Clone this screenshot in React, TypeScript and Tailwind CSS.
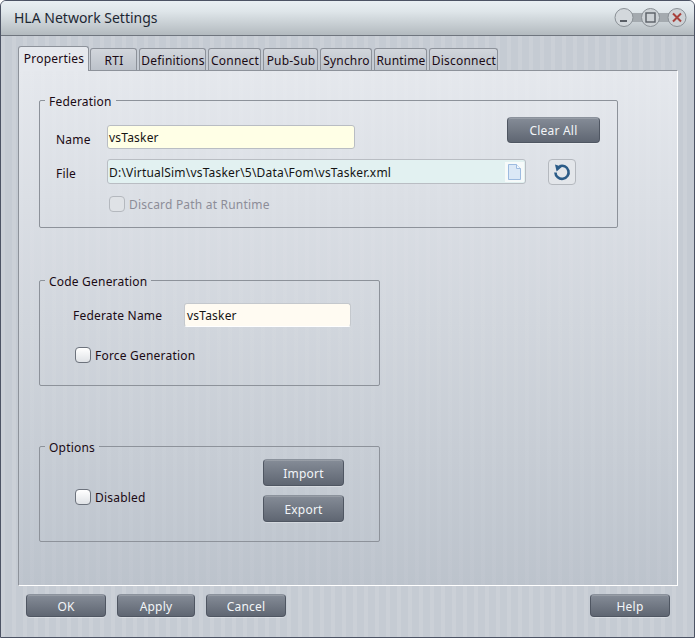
import React from "react";

const font = "font-['Noto_Sans','Open_Sans',sans-serif] text-[12px] leading-[16px] tracking-[0.2px]";

function DarkButton({ label, className }: { label: string; className: string }) {
  return (
    <button
      className={`flex items-center justify-center rounded-[4px] border border-[#4f5662] border-t-[#8b929c] bg-[linear-gradient(#858c97,#5f6672)] pt-[2px] text-[#f2f5f8] shadow-[inset_0_1px_0_rgba(255,255,255,0.15),0_1px_0_rgba(255,255,255,0.3)] ${className}`}
    >
      {label}
    </button>
  );
}

function Check({ label, disabled }: { label: string; disabled?: boolean }) {
  return (
    <div className={`flex items-start gap-[4px] ${disabled ? "text-[#8d8d98]" : "text-[#1a0a14]"}`}>
      <span
        className={`h-[16px] w-[16px] rounded-[4px] border ${
          disabled
            ? "border-[#b4b8be] bg-[#dfe2e6]"
            : "border-[#6c727c] bg-[linear-gradient(#ffffff,#dfe2e6)]"
        }`}
      />
      <span className="pt-[1px]">{label}</span>
    </div>
  );
}

function Group({ title, className, children }: { title: string; className: string; children: React.ReactNode }) {
  return (
    <fieldset className={`rounded-[2px] border border-[#8d929a] ${className}`}>
      <legend className="ml-[5px] px-[4px] pt-[4px] text-[#1a0a14]">{title}</legend>
      {children}
    </fieldset>
  );
}

const tabs: [string, string][] = [
  ["RTI", "w-[47px]"],
  ["Definitions", "w-[67px]"],
  ["Connect", "w-[53px]"],
  ["Pub-Sub", "w-[55px]"],
  ["Synchro", "w-[52px]"],
  ["Runtime", "w-[53px]"],
  ["Disconnect", "w-[69px]"],
];

export default function App() {
  return (
    <div
      className={`${font} flex h-[638px] w-[695px] flex-col overflow-hidden rounded-t-[6px] border border-[#4c5364] bg-[#c5cbd3] [background-image:repeating-linear-gradient(90deg,rgba(255,255,255,0.10)_0_4px,transparent_4px_11px)]`}
    >
      <div className="flex h-[35px] shrink-0 items-start justify-between border-b border-[#6f757e] bg-[linear-gradient(#e9eff3,#dfe6ea_30%,#b3babf)] pl-[13px] pr-[7px] pt-[6px]">
        <span className="mt-[1px] text-[14px] leading-[20px] tracking-normal text-[#1d2733]">HLA Network Settings</span>
        <svg width="73" height="21" viewBox="0 0 73 21">
          <rect x="10" y="6" width="53" height="9" fill="#a4aaaf" />
          <circle cx="10" cy="10.5" r="9" fill="#d3d8dc" stroke="#8a9096" />
          <circle cx="36.5" cy="10.5" r="9" fill="#cdd2d6" stroke="#8a9096" />
          <circle cx="63" cy="10.5" r="9" fill="#cdd2d6" stroke="#8a9096" />
          <path d="M6 14h7" stroke="#5a5f66" strokeWidth="2" />
          <rect x="32" y="6" width="9" height="9" fill="none" stroke="#5a5f66" strokeWidth="1.4" />
          <path d="M59 6.5l8 8M67 6.5l-8 8" stroke="#a8413c" strokeWidth="2" />
        </svg>
      </div>

      <div className="flex min-h-0 flex-1 flex-col px-[17px] pt-[10px]">
        <div className="relative z-10 flex h-[24px] items-end">
          <div className="mb-[-1px] flex h-[25px] w-[71px] items-center justify-center rounded-t-[3px] border border-b-0 border-[#8d929a] bg-[#e6e9ee] pb-[1px] pl-[1px] text-[#1a0a14]">
            Properties
          </div>
          <div className="ml-[1px] flex gap-[2px]">
            {tabs.map(([t, w]) => (
              <div
                key={t}
                className={`flex h-[22px] items-center justify-center rounded-t-[3px] border border-b-0 border-[#8d929a] bg-[linear-gradient(#d2d6dc,#bcc2ca)] pl-[1px] pt-[2px] text-[#1a0a14] ${w}`}
              >
                {t}
              </div>
            ))}
          </div>
        </div>

        <div className="h-[516px] w-[660px] shrink-0 border border-[#8d929a] border-b-white border-r-white bg-[#d0d5dc] [background-image:repeating-linear-gradient(90deg,rgba(255,255,255,0.04)_0_4px,transparent_4px_11px),linear-gradient(#e5e8ed,#bcc3cc)] pl-[20px] pt-[19px]">
          <Group title="Federation" className="h-[138px] w-[579px]">
            <div className="pl-[16px] pr-[17px]">
              <div className="mt-[7px] flex items-start">
                <span className="mt-[15px] w-[51px] text-[#1a0a14]">Name</span>
                <div className="mt-[8px] flex h-[24px] w-[248px] items-center rounded-[3px] border border-[#b9bdc3] bg-[#ffffe6] pl-[1px] pt-[2px] text-[#141414]">
                  vsTasker
                </div>
                <DarkButton label="Clear All" className="ml-auto h-[26px] w-[93px]" />
              </div>
              <div className="mt-[10px] flex items-start">
                <span className="mt-[7px] w-[51px] text-[#1a0a14]">File</span>
                <div className="flex h-[25px] w-[419px] items-center justify-between rounded-[3px] border border-[#b9bdc3] bg-[#e2f1f1] pl-[1px] text-[#141414]">
                  <span className="pt-[2px]">D:\VirtualSim\vsTasker\5\Data\Fom\vsTasker.xml</span>
                  <span className="mr-[1px] flex h-[20px] w-[19px] items-center justify-center bg-[#f6fafa]">
                    <svg width="13" height="16" viewBox="0 0 13 16">
                      <path d="M.5.5h8l4 4v11H.5z" fill="#dbe8f6" stroke="#9dbbe0" />
                      <path d="M8.5.5v4h4" fill="#f2f7fc" stroke="#9dbbe0" />
                    </svg>
                  </span>
                </div>
                <button className="ml-[22px] flex h-[26px] w-[28px] items-center justify-center rounded-[4px] border border-[#b4b8be] bg-[#e3e6ea]">
                  <svg width="18" height="18" viewBox="0 0 18 18">
                    <path d="M6.5 3.2A6.6 6.6 0 1 1 2.4 9.5" fill="none" stroke="#2c5c88" strokeWidth="2.6" />
                    <path d="M2 1.5l7 2.2L3.6 8.6z" fill="#2c5c88" />
                  </svg>
                </button>
              </div>
              <div className="ml-[53px] mt-[11px]">
                <Check label="Discard Path at Runtime" disabled />
              </div>
            </div>
          </Group>

          <Group title="Code Generation" className="mt-[42px] h-[116px] w-[341px]">
            <div className="mt-[13px] flex items-center pl-[33px]">
              <span className="w-[111px] pt-[2px] text-[#1a0a14]">Federate Name</span>
              <div className="flex h-[24px] w-[167px] items-center rounded-[3px] border border-[#c4c8cd] border-b-white bg-[#fffbf2] pl-[2px] pt-[2px] text-[#141414]">
                vsTasker
              </div>
            </div>
            <div className="ml-[35px] mt-[20px]">
              <Check label="Force Generation" />
            </div>
          </Group>

          <Group title="Options" className="mt-[50px] h-[106px] w-[341px]">
            <div className="flex items-start justify-between pl-[35px] pr-[35px]">
              <div className="mt-[33px]">
                <Check label="Disabled" />
              </div>
              <div className="mt-[3px] flex flex-col gap-[9px]">
                <DarkButton label="Import" className="h-[27px] w-[81px]" />
                <DarkButton label="Export" className="h-[27px] w-[81px]" />
              </div>
            </div>
          </Group>
        </div>

        <div className="flex items-start pl-[8px] pr-[7px] pt-[8px]">
          <DarkButton label="OK" className="h-[23px] w-[80px]" />
          <DarkButton label="Apply" className="ml-[11px] h-[23px] w-[78px]" />
          <DarkButton label="Cancel" className="ml-[11px] h-[23px] w-[80px]" />
          <DarkButton label="Help" className="ml-auto h-[23px] w-[80px]" />
        </div>
      </div>
    </div>
  );
}
